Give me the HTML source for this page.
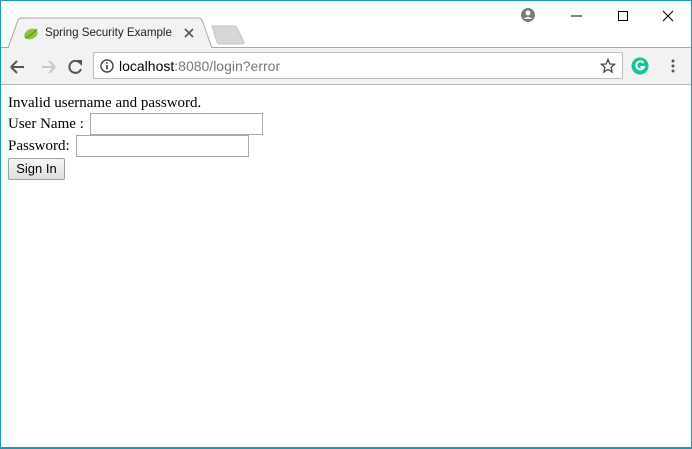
<!DOCTYPE html>
<html><head><meta charset="utf-8"><style>
*{margin:0;padding:0;box-sizing:border-box}
body{width:692px;height:449px;overflow:hidden;background:#fff;position:relative;font-family:"Liberation Sans",sans-serif}
.frame{position:absolute;left:0;top:0;width:692px;height:449px;border:1px solid #1a98b8;border-bottom-width:2px;z-index:10;pointer-events:none}
.toolbar{position:absolute;left:1px;top:47px;width:690px;height:38px;background:#f2f2f2;border-bottom:1px solid #b8b8b8;border-top:1px solid #a9a9a9}
.omni{position:absolute;left:93px;top:52px;width:530px;height:27px;background:#fff;border:1px solid #bdbdbd;border-radius:2px}
.abs{position:absolute}
.serif{font-family:"Liberation Serif",serif;font-size:15px;color:#000}
input{position:absolute;border:1px solid #a9a9a9;background:#fff;height:22px}
</style></head><body>
<div class="frame"></div>
<div class="toolbar"></div>
<svg class="abs" style="left:0;top:17px" width="260" height="32">
<path d="M1 31 L8 31 L18 3 Q19 1 22 1 L198 1 Q201 1 202 3 L212 31" fill="#f2f2f2" stroke="#a9a9a9" stroke-width="1"/>
<rect x="0" y="31" width="212" height="2" fill="#f2f2f2"/>
<path d="M212 9 L234 9 Q236 9 237 11 L244 25 Q244 27 242 27 L220 27 Q218 27 217 25 Z" fill="#d7d7d7" stroke="#c4c4c4"/>
<ellipse cx="31" cy="17" rx="7" ry="5" fill="#8cc63f" transform="rotate(-25 31 17)"/>
<path d="M25 21 Q31 19 37 12" stroke="#5a8a20" stroke-width="1" fill="none"/>
<path d="M185 12 L193 20 M193 12 L185 20" stroke="#555" stroke-width="1.6"/>
</svg>
<div class="abs" style="left:45px;top:26px;font-size:11.6px;color:#222">Spring Security Example</div>
<svg class="abs" style="left:519px;top:6px" width="18" height="18"><circle cx="9" cy="9" r="7" fill="#7a7a7a"/><circle cx="9" cy="7" r="2.5" fill="#fff"/><path d="M4.5 13 Q9 9 13.5 13" fill="#fff"/></svg>
<svg class="abs" style="left:568px;top:8px" width="110" height="16"><path d="M3 8 H14" stroke="#000"/><rect x="50.5" y="3.5" width="9" height="9" fill="none" stroke="#000"/><path d="M95 3 L105 13 M105 3 L95 13" stroke="#000"/></svg>
<svg class="abs" style="left:8px;top:57px" width="80" height="20">
<path d="M3 10 H16 M3 10 L9 4 M3 10 L9 16" stroke="#555" stroke-width="2" fill="none"/>
<path d="M47 10 H34 M47 10 L41 4 M47 10 L41 16" stroke="#c8c8c8" stroke-width="2" fill="none"/>
<path d="M72 6 A6 6 0 1 0 73 12" stroke="#555" stroke-width="2" fill="none"/><path d="M68 3 L74 3 L74 9 Z" fill="#555"/>
</svg>
<div class="omni"></div>
<svg class="abs" style="left:99px;top:58px" width="16" height="16"><circle cx="8" cy="8" r="6" fill="none" stroke="#444" stroke-width="1.4"/><rect x="7.2" y="7" width="1.6" height="4.5" fill="#444"/><rect x="7.2" y="4" width="1.6" height="1.6" fill="#444"/></svg>
<div class="abs" style="left:119px;top:58px;font-size:14px;color:#000">localhost<span style="color:#777">:8080/login?error</span></div>
<svg class="abs" style="left:600px;top:58px" width="16" height="16"><path d="M8 1.5 L9.9 6 L14.5 6.3 L11 9.3 L12.1 14 L8 11.5 L3.9 14 L5 9.3 L1.5 6.3 L6.1 6 Z" fill="none" stroke="#444" stroke-width="1.3"/></svg>
<svg class="abs" style="left:631px;top:57px" width="18" height="18"><circle cx="9" cy="9" r="8.5" fill="#15c39a"/><path d="M12.5 6 A4 4 0 1 0 13 10 H9.5" stroke="#fff" stroke-width="2" fill="none"/></svg>
<svg class="abs" style="left:670px;top:59px" width="6" height="16"><circle cx="3" cy="2" r="1.5" fill="#555"/><circle cx="3" cy="7" r="1.5" fill="#555"/><circle cx="3" cy="12" r="1.5" fill="#555"/></svg>
<div class="abs serif" style="left:8px;top:95px">Invalid username and password.</div>
<div class="abs serif" style="left:8px;top:116px">User Name :</div>
<input style="left:90px;top:113px;width:173px">
<div class="abs serif" style="left:8px;top:138px">Password:</div>
<input style="left:76px;top:135px;width:173px">
<div class="abs" style="left:8px;top:158px;width:57px;height:22px;border:1px solid #a0a0a0;border-radius:2px;background:linear-gradient(#f6f6f6,#dedede);font-size:13px;text-align:center;line-height:20px;color:#000">Sign In</div>
</body></html>
